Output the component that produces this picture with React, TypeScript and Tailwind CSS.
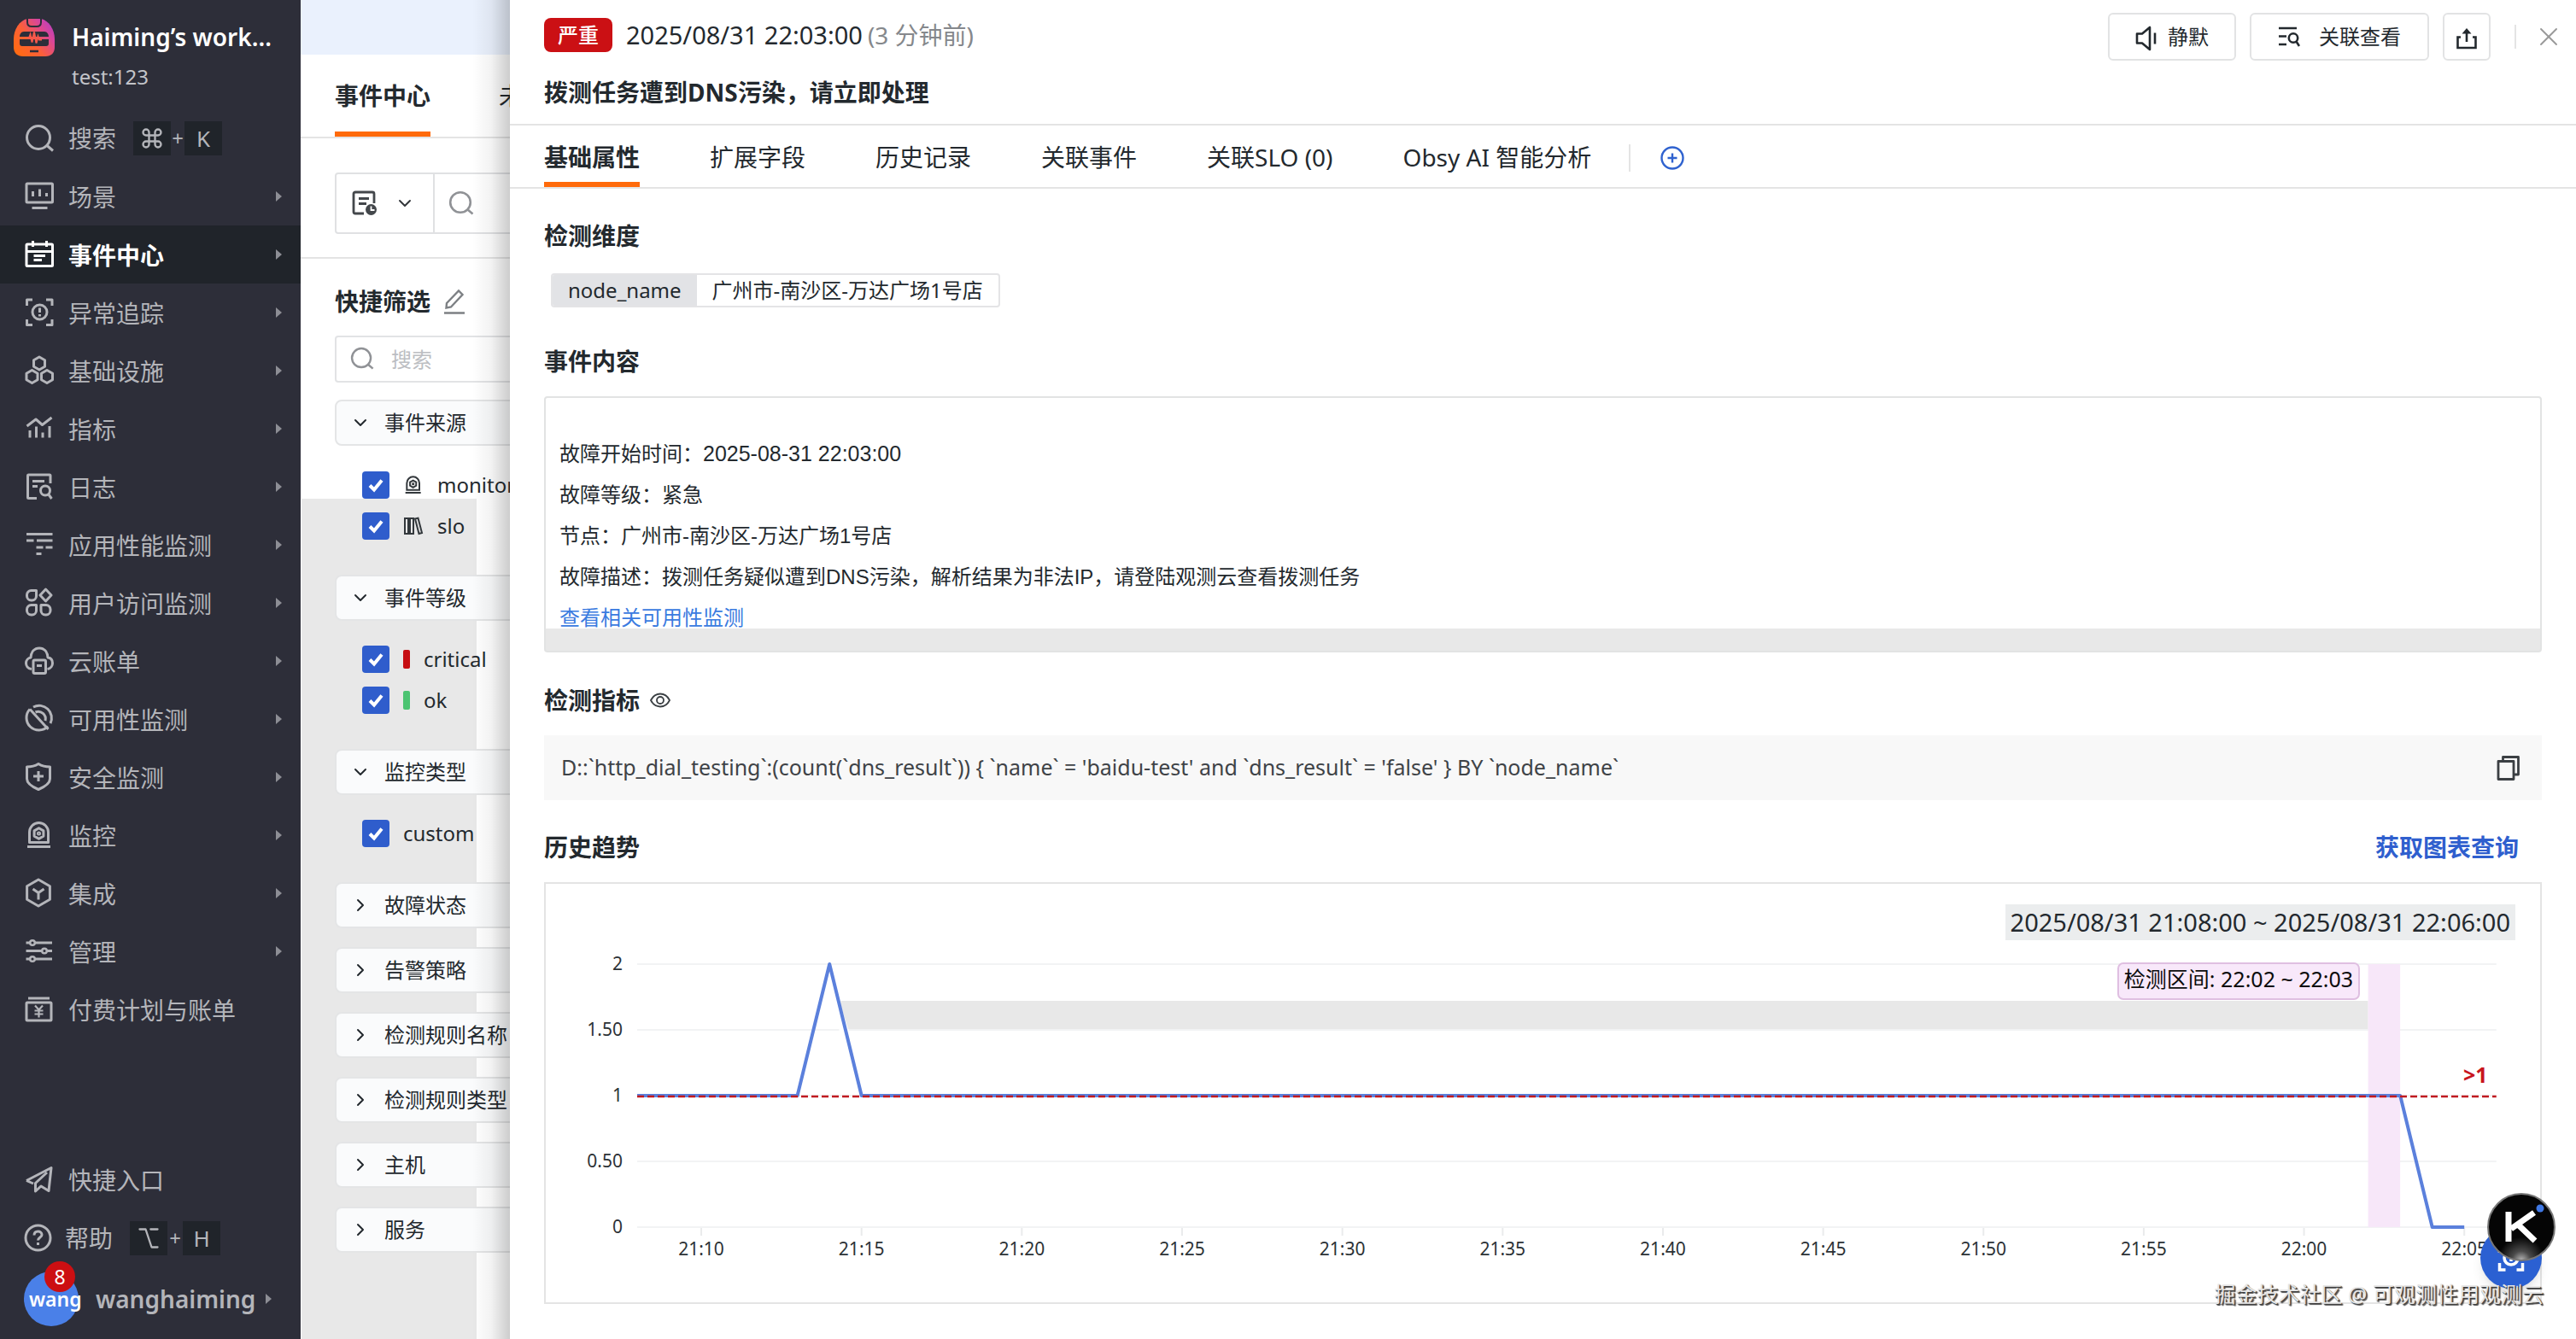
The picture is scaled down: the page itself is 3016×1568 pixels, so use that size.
import React from "react";
import { Command, Option, X, ChevronDown, ChevronRight } from "lucide-react";

const hexagon = (cx: number, cy: number, r: number) =>
  [0, 1, 2, 3, 4, 5]
    .map((i) => {
      const a = (Math.PI / 3) * i - Math.PI / 2;
      return `${(cx + r * Math.cos(a)).toFixed(1)},${(cy + r * Math.sin(a)).toFixed(1)}`;
    })
    .join(" ");

function NavSvg({ children }: { children: React.ReactNode }) {
  return (
    <svg viewBox="0 0 36 36" className="size-9 shrink-0" fill="none" stroke="currentColor" strokeWidth="3" strokeLinejoin="round" strokeLinecap="butt" aria-hidden="true">
      {children}
    </svg>
  );
}

const icons: Record<string, React.ReactNode> = {
  search: (
    <>
      <circle cx="17" cy="17" r="13.5" />
      <path d="M26.5 26 L34 32.5" />
    </>
  ),
  scene: (
    <>
      <rect x="3" y="3" width="30.5" height="22" rx="1" />
      <path d="M10.5 12v6M18.5 9.5v8.500M26.500 14v4M9.500 31.500h18" />
    </>
  ),
  event: (
    <>
      <rect x="3" y="6" width="30.500" height="25.500" rx="1" />
      <path d="M10.500 2v7M26.500 2v7M3 14.500h30.500M11.500 19.500h13.500M11.500 24.500h9.500" />
    </>
  ),
  trace: (
    <>
      <path d="M3.500 10V3H10M26 3h7v7M33 26v6.500h-7M10 32.500H3.500V26" />
      <circle cx="18.500" cy="17.500" r="8.500" />
      <path d="M18.500 12.500v5.500M18.500 20v2.500" />
    </>
  ),
  infra: (
    <>
      <polygon points={hexagon(18, 9.5, 7.5)} />
      <polygon points={hexagon(9.5, 25, 7.5)} />
      <polygon points={hexagon(27, 25, 7.5)} />
    </>
  ),
  metric: (
    <>
      <path d="M7 28.500V20M14.500 28.500V15.500M22 28.500V22.500M30 28.500V15" />
      <path d="M3.500 15L14 7l7.500 6.500L32.500 5" />
    </>
  ),
  log: (
    <>
      <path d="M15 31.500H5.500a1 1 0 0 1-1-1V5a1 1 0 0 1 1-1H30a1 1 0 0 1 1 1v9" />
      <path d="M10 11.500h14M10 17.500h6" />
      <circle cx="25" cy="22.500" r="5.500" />
      <path d="M28.500 26.500L32.500 32" />
    </>
  ),
  apm: <path d="M3 5.500h30.500M3 13h8.500M15 13h18.500M14.500 21h8M25.500 21h8M14.500 28.500h6" />,
  rum: (
    <>
      <path d="M8.500 3.500h6V10a5 5 0 0 1-5 5H8.500a5 5 0 0 1-5-5V8.500a5 5 0 0 1 5-5z" />
      <path d="M25.500 2l6.500 7-6.500 7-6.500-7z" />
      <path d="M8.500 20.500h6V27a5 5 0 0 1-5 5H8.500a5 5 0 0 1-5-5v-1.500a5 5 0 0 1 5-5z" />
      <path d="M20 20.500h6a5 5 0 0 1 5 5V27a5 5 0 0 1-5 5h-1a5 5 0 0 1-5-5z" />
    </>
  ),
  cloud: (
    <>
      <path d="M9 27.500C4.500 27 2.500 23.500 2.500 20.500c0-3.500 2.500-6 5.500-6.500C8.500 7 12.500 3 18 3s9.500 4 10 11c3.500.5 5.500 3 5.500 6.500 0 3-2 6.500-6 7" />
      <rect x="11" y="17" width="14.500" height="15.500" rx="1.500" />
      <path d="M15 23.500h6" />
    </>
  ),
  avail: (
    <>
      <path d="M7 6.500a14.500 14.500 0 1 0 21 20" />
      <path d="M11 4a14.500 14.500 0 0 1 20 19M13.500 10a8.500 8.500 0 0 1 11.500 10M7 6.500L28.500 30" />
    </>
  ),
  shield: (
    <>
      <path d="M17 2.500c4 2.500 8.500 3.500 13.500 3.500v14c0 6-6.500 9.500-13.500 12.500C10 29.500 3.500 26 3.500 20V6C8.500 6 13 5 17 2.500z" />
      <path d="M17 11v12M11 17h12" />
    </>
  ),
  monitor: (
    <>
      <path d="M6.500 26.500V14.500a11 11 0 0 1 22 0v12z" />
      <path d="M4 31.500h27" />
      <polygon points={hexagon(17.5, 16, 6.2)} />
      <circle cx="17.500" cy="16" r="1.500" strokeWidth="2" />
    </>
  ),
  integ: (
    <>
      <polygon points={hexagon(17, 17.5, 15.5)} />
      <path d="M10.500 13l6.500 4.500 6.500-4.500M17 17.500v8" />
    </>
  ),
  manage: (
    <>
      <path d="M2.500 8h5M13 8h20M2.500 17.500h19M27 17.500h6M2.500 27h5M13 27h20" />
      <circle cx="10" cy="8" r="2.800" strokeWidth="2.500" />
      <circle cx="24" cy="17.500" r="2.800" strokeWidth="2.500" />
      <circle cx="10" cy="27" r="2.800" strokeWidth="2.500" />
    </>
  ),
  billing: (
    <>
      <rect x="3" y="10" width="29" height="21" rx="1" />
      <path d="M5 5h25" />
      <path d="M13 13.500l4.500 5 4.500-5M17.500 18.500v9M12.500 19.500h10M12.500 23.500h10" strokeWidth="2.200" />
    </>
  ),
  plane: <path d="M3 18.500L32 3.500 29 30.500l-9-5.500-6.500 6V21.500L27 9M3 18.500l8 3.500" />,
  help: (
    <>
      <circle cx="16.500" cy="17.500" r="14.500" />
      <path d="M12 14.500c0-3 2-4.500 4.500-4.500s4.500 1.500 4.500 4c0 3-4.500 3-4.500 6.500M16.500 23v3" />
    </>
  ),
};

const nav = [
  ["scene", "场景"],
  ["event", "事件中心"],
  ["trace", "异常追踪"],
  ["infra", "基础设施"],
  ["metric", "指标"],
  ["log", "日志"],
  ["apm", "应用性能监测"],
  ["rum", "用户访问监测"],
  ["cloud", "云账单"],
  ["avail", "可用性监测"],
  ["shield", "安全监测"],
  ["monitor", "监控"],
  ["integ", "集成"],
  ["manage", "管理"],
  ["billing", "付费计划与账单"],
];

function Arrow() {
  return (
    <svg viewBox="0 0 7 12" className="h-3 w-[7px] shrink-0" fill="#8d8e95" aria-hidden="true">
      <path d="M0 0l7 6-7 6z" />
    </svg>
  );
}

function Key({ children }: { children: React.ReactNode }) {
  return <kbd className="flex h-10 w-11 items-center justify-center bg-[#20242a] font-sans text-[26px] leading-10">{children}</kbd>;
}

function Logo() {
  return (
    <svg viewBox="0 0 48 44" className="h-11 w-12 shrink-0" aria-hidden="true">
      <defs>
        <linearGradient id="logoFill" x1="0" y1="0.8" x2="1" y2="0.1">
          <stop offset="0" stopColor="#ff6a13" />
          <stop offset="0.4" stopColor="#fb5f3a" />
          <stop offset="0.75" stopColor="#d8459c" />
          <stop offset="1" stopColor="#b13fc4" />
        </linearGradient>
      </defs>
      <path d="M16 0h16c9 2 16 12 16 24v9c0 7-4 11-11 11H11C4 44 0 40 0 33v-9C0 12 7 2 16 0z" fill="url(#logoFill)" />
      <path d="M16 0v4c0 3 2 5 5 5h6c3 0 5-2 5-5V0" fill="none" stroke="#2d2e39" strokeWidth="2" />
      <path d="M12 15h24c3 0 5 3 5 6H7c0-3 2-6 5-6zM7 24h34v5c0 2-1 3-3 3H10c-2 0-3-1-3-3z" fill="#2d2e39" />
      <path d="M16 22.500h2l1.500-4 2 9 2.500-12 2.500 13 2-8 1.500 4h3" fill="none" stroke="#f7584a" strokeWidth="2" />
      <path d="M19 38h10" stroke="#2d2e39" strokeWidth="2.500" />
    </svg>
  );
}

function Sidebar() {
  return (
    <aside className="flex w-[352px] shrink-0 flex-col bg-[#2d2e39] text-[28px] text-[#b4b5ba]">
      <div className="flex h-32 gap-5 pl-4 pt-[22px]">
        <Logo />
        <div>
          <div className="text-[28px] font-semibold leading-[42px] text-white">Haiming’s work...</div>
          <div className="text-[24px] leading-[52px] text-[#c3c4c9]">test:123</div>
        </div>
      </div>
      <button className="flex h-[68px] items-center pl-7 text-left">
        <NavSvg>{icons.search}</NavSvg>
        <span className="ml-4 mr-5">搜索</span>
        <Key><Command className="size-7" strokeWidth={2} /></Key>
        <span className="w-4 text-center text-[24px]">+</span>
        <Key>K</Key>
      </button>
      <nav>
        {nav.map(([icon, label]) => (
          <a
            key={icon}
            href="#"
            className={
              icon === "event"
                ? "flex h-[68px] items-center gap-4 bg-[#20242a] pl-7 pr-[22px] font-semibold text-white"
                : "flex h-[68px] items-center gap-4 pl-7 pr-[22px]"
            }
          >
            <NavSvg>{icons[icon]}</NavSvg>
            <span className="flex-1 whitespace-nowrap pt-0.5">{label}</span>
            {icon !== "billing" && <Arrow />}
          </a>
        ))}
      </nav>
      <div className="mt-auto">
        <a href="#" className="flex h-[68px] items-center gap-4 pl-7">
          <NavSvg>{icons.plane}</NavSvg>
          <span>快捷入口</span>
        </a>
        <button className="flex h-[68px] items-center pl-7 text-left">
          <NavSvg>{icons.help}</NavSvg>
          <span className="ml-3 mr-5">帮助</span>
          <Key><Option className="size-7" strokeWidth={2} /></Key>
          <span className="w-[18px] text-center text-[24px]">+</span>
          <Key>H</Key>
        </button>
        <button className="flex h-[84px] items-center pb-2.5 pl-7">
          <span className="relative flex size-16 items-center whitespace-nowrap rounded-full bg-[#4a80e8] pl-1.5 text-[23px] font-semibold text-white">
            wang
            <span className="absolute -top-3 left-6 flex size-9 items-center justify-center rounded-full bg-[#cc0f12] text-[23px] font-normal leading-9">8</span>
          </span>
          <span className="ml-5 mr-3 font-semibold leading-10">wanghaiming</span>
          <Arrow />
        </button>
      </div>
    </aside>
  );
}

function CheckItem({ id, label, icon }: { id: string; label: string; icon?: React.ReactNode }) {
  return (
    <div className="flex h-8 items-center">
      <span className="relative mr-4 size-8 shrink-0">
        <input id={id} type="checkbox" defaultChecked className="peer size-8 appearance-none rounded-[4px] bg-white checked:bg-[#2f5dcc]" />
        <svg viewBox="0 0 32 32" className="pointer-events-none absolute inset-0 size-8" fill="none" stroke="white" strokeWidth="4" aria-hidden="true">
          <path d="M9 16.500l5 5 9-11" />
        </svg>
      </span>
      {icon}
      <label htmlFor={id} className="whitespace-nowrap leading-8">{label}</label>
    </div>
  );
}

function FilterHead({ label, open }: { label: string; open?: boolean }) {
  return (
    <button className="flex h-[54px] w-[360px] items-center rounded-lg border-2 border-[#e4e5e6] bg-[#fafbfc] pl-4 text-left">
      {open ? <ChevronDown className="size-6" strokeWidth={2} /> : <ChevronRight className="size-6" strokeWidth={2} />}
      <span className="ml-4 whitespace-nowrap leading-8">{label}</span>
    </button>
  );
}

function SearchIcon({ className }: { className: string }) {
  return (
    <svg viewBox="0 0 30 30" className={className} fill="none" stroke="#909296" strokeWidth="2.600" aria-hidden="true">
      <circle cx="14" cy="14" r="11.800" />
      <path d="M22 22l6.500 5.500" />
    </svg>
  );
}

function EventColumn() {
  return (
    <section className="relative w-[245px] shrink-0 overflow-hidden bg-white text-[24px] text-[#23292e]">
      <div className="h-16 bg-[#eaf1fd]" />
      <div className="flex h-[98px] gap-20 whitespace-nowrap border-b-2 border-[#e4e4e4] pl-10 text-[28px]">
        <button className="border-b-[6px] border-[#ff6a0a] pt-1.5 font-semibold">事件中心</button>
        <button className="pb-[6px] pt-1.5">未恢复事件</button>
      </div>
      <div className="h-[141px] border-b-2 border-[#e4e4e4] pl-10 pt-10">
        <div className="flex h-[72px] w-[400px] items-center rounded border-2 border-[#e0e1e3]">
          <button className="flex h-full w-[115px] items-center gap-5 border-r-2 border-[#e0e1e3] pl-[18px]" aria-label="视图">
            <svg viewBox="0 0 30 30" className="size-[30px]" fill="none" stroke="#43474b" strokeWidth="2.800">
              <path d="M14 27H4a2 2 0 0 1-2-2V4a2 2 0 0 1 2-2h20a2 2 0 0 1 2 2v11M8 9.500h12M8 15.500h9" />
              <circle cx="22.500" cy="22.500" r="6.500" fill="#43474b" stroke="none" />
              <path d="M22.500 18.500v4.500h4" stroke="white" strokeWidth="1.800" />
            </svg>
            <ChevronDown className="size-6 text-[#33373b]" />
          </button>
          <SearchIcon className="ml-4 size-[30px]" />
        </div>
      </div>
      <div className="h-[1265px] bg-[linear-gradient(#e8e8e8,#e8e8e8)] bg-[length:205px_100%] bg-[position:1px_281px] bg-no-repeat pl-10 pt-[30px]">
        <div className="flex h-10 items-center gap-3.5 whitespace-nowrap text-[28px] font-semibold">
          快捷筛选
          <svg viewBox="0 0 28 30" className="h-[30px] w-7" fill="none" stroke="#7d8084" strokeWidth="2.400" aria-hidden="true">
            <path d="M5 17L19 2.500l4.500 4.500L10 21.500l-5.500 1zM2 28.500h24" />
          </svg>
        </div>
        <div className="relative mt-[20px] h-[55px] w-[360px]">
          <SearchIcon className="absolute left-[18px] top-[13px] size-7" />
          <input aria-label="搜索" placeholder="搜索" className="h-full w-full rounded border-2 border-[#e2e3e5] pl-16 outline-none placeholder:text-[#bcbec2]" />
        </div>
        <div className="mt-[20px]">
          <FilterHead label="事件来源" open />
          <div className="flex flex-col gap-4 pb-[41px] pl-8 pt-[30px]">
            <CheckItem
              id="monitor"
              label="monitor"
              icon={
                <svg viewBox="0 0 36 36" className="mr-4 size-6 shrink-0" fill="none" stroke="#33383c" strokeWidth="3">
                  {icons.monitor}
                </svg>
              }
            />
            <CheckItem
              id="slo"
              label="slo"
              icon={
                <svg viewBox="0 0 24 24" className="mr-4 size-6 shrink-0" fill="none" stroke="#33383c" strokeWidth="2">
                  <path d="M2 3h4v18H2zM8 3h4v18H8zM14 3.500l3.500-.8L22 20l-3.500 1z" />
                </svg>
              }
            />
          </div>
          <FilterHead label="事件等级" open />
          <div className="flex flex-col gap-4 pb-[41px] pl-8 pt-[29px]">
            <CheckItem id="critical" label="critical" icon={<span className="mr-4 h-[22px] w-2 rounded-xs bg-[#c60d12]" />} />
            <CheckItem id="ok" label="ok" icon={<span className="mr-4 h-[22px] w-2 rounded-xs bg-[#4cc472]" />} />
          </div>
          <FilterHead label="监控类型" open />
          <div className="pb-[41px] pl-8 pt-[29px]">
            <CheckItem id="custom" label="custom" />
          </div>
          <div className="flex flex-col gap-[22px]">
            {["故障状态", "告警策略", "检测规则名称", "检测规则类型", "主机", "服务"].map((label) => (
              <FilterHead key={label} label={label} />
            ))}
          </div>
        </div>
      </div>
      <div className="pointer-events-none absolute inset-y-0 right-0 w-11 bg-linear-to-r from-transparent via-black/5 to-black/20" />
    </section>
  );
}

const tabs = ["基础属性", "扩展字段", "历史记录", "关联事件", "关联SLO (0)", "Obsy AI 智能分析"];

function DrawerHeader() {
  return (
    <header className="border-b-2 border-[#e4e4e4] pb-[17px] pl-10 pr-3.5 pt-[15px]">
      <div className="flex h-14 items-center">
        <div className="flex items-center pb-1 text-[29px] leading-10">
          <span className="flex h-10 items-center rounded-lg bg-[#cb1014] px-4 text-[24px] font-medium text-white">严重</span>
          <span className="ml-4">2025/08/31 22:03:00</span>
          <span className="ml-1.5 text-[28px] text-[#85888c]">(3 分钟前)</span>
        </div>
        <div className="ml-auto flex h-14 items-center gap-4 text-[24px]">
          <button className="flex h-14 items-center gap-3 rounded-md border-2 border-[#e2e3e4] px-[30px]">
            <svg viewBox="0 0 26 30" className="mt-1 h-[30px] w-[26px]" fill="none" stroke="currentColor" strokeWidth="2.600" strokeLinejoin="round">
              <path d="M2 9.500h6l9-7.500v26l-9-7.500H2zM23 8.500v13" />
            </svg>
            静默
          </button>
          <button className="flex h-14 items-center gap-[22px] rounded-md border-2 border-[#e2e3e4] px-[31px]">
            <svg viewBox="0 0 26 26" className="size-[26px]" fill="none" stroke="currentColor" strokeWidth="2.600">
              <path d="M1 3h21M1 12.500h9M1 22h9" />
              <circle cx="18" cy="14.500" r="5.200" />
              <path d="M21.500 18.500L25 24" />
            </svg>
            关联查看
          </button>
          <button className="flex size-14 items-center justify-center rounded-md border-2 border-[#e2e3e4]" aria-label="分享">
            <svg viewBox="0 0 26 26" className="mt-1 size-[26px]" fill="none" stroke="currentColor" strokeWidth="2.600">
              <path d="M6 11.500H2.500V24h21V11.500H20M13 17V5" />
              <path d="M7.500 7.500L13 1l5.500 6.500z" fill="currentColor" stroke="none" />
            </svg>
          </button>
          <span className="ml-3 h-7 w-0.5 bg-[#e4e4e4]" />
          <button aria-label="关闭" className="ml-1 text-[#999]">
            <X className="size-9" strokeWidth={1.25} />
          </button>
        </div>
      </div>
      <h1 className="mt-[17px] text-[28px] font-bold leading-10">拨测任务遭到DNS污染，请立即处理</h1>
    </header>
  );
}

function SectionTitle({ children }: { children: React.ReactNode }) {
  return <h2 className="text-[28px] font-semibold leading-10">{children}</h2>;
}

const plotLeft = 107;
const perMinute = 37.53;
const px = (minute: number) => plotLeft + minute * perMinute;
const py = (value: number) => 336 - value * 154;

const series: [number, number][] = [[0, 1], [5, 1], [6, 2], [7, 1], [55, 1], [56, 0], [57, 0]];
const ticks = ["21:10", "21:15", "21:20", "21:25", "21:30", "21:35", "21:40", "21:45", "21:50", "21:55", "22:00", "22:05"];

function TrendChart() {
  const right = px(58);
  return (
    <svg viewBox="0 0 2335 424" className="block w-full" role="img" aria-label="历史趋势">
      {[0, 0.5, 1, 1.5, 2].map((v) => (
        <g key={v}>
          <path d={`M${plotLeft} ${py(v)}H${right}`} stroke="#f2f3f4" strokeWidth="2" />
          <text x="90" y={py(v) + 7} textAnchor="end" fontSize="21" fill="#2c3236">
            {v % 1 ? v.toFixed(2) : v}
          </text>
        </g>
      ))}
      <rect x={px(6.35)} y="71" width={px(54) - px(6.35)} height="33" fill="#e8e8e8" />
      <path d={`M${px(6.3)} 70L${px(6.6)} 106H${px(6.3)}z`} fill="white" />
      <rect x={px(54)} y={py(2)} width={perMinute} height="308" fill="#f7e7f9" />
      {ticks.map((t, i) => (
        <g key={t}>
          <path d={`M${px(2 + i * 5)} 337v9`} stroke="#eaebec" strokeWidth="2" />
          <text x={px(2 + i * 5)} y="369" textAnchor="middle" fontSize="21" fill="#2c3236">{t}</text>
        </g>
      ))}
      <polyline points={series.map(([m, v]) => `${px(m).toFixed(1)},${py(v)}`).join(" ")} fill="none" stroke="#5b80dc" strokeWidth="4" strokeLinejoin="round" />
      <path d={`M${plotLeft} 183H${right}`} stroke="#c01a20" strokeWidth="2.500" strokeDasharray="8 4" />
      <text x="2245" y="167" fontSize="25" fontWeight="700" fill="#c8161d">&gt;1</text>
      <rect x="1841" y="27" width="282" height="42" rx="6" fill="#f8e8fa" stroke="#dfbfe1" strokeWidth="2" />
      <text x="1982" y="55" textAnchor="middle" fontSize="25" fill="#0c0c0c">检测区间: 22:02 ~ 22:03</text>
    </svg>
  );
}

function FloatingButtons() {
  return (
    <div className="absolute bottom-[91px] right-6">
      <button aria-label="扫描" className="absolute -bottom-8 right-4 size-[72px] rounded-full bg-[#2b60d2] shadow-lg">
        <svg viewBox="0 0 72 72" className="size-[72px]" fill="none" stroke="white" strokeWidth="3.500">
          <path d="M22.500 42v8h7M42.500 50h7v-8M22.500 30v-7h7M42.500 23h7v7" />
          <circle cx="36" cy="36" r="8" />
          <path d="M36 32v8" />
        </svg>
      </button>
      <button aria-label="助手" className="relative block size-20 rounded-full">
        <svg viewBox="0 0 80 80" className="size-20">
          <defs>
            <radialGradient id="kGlow" cx="0.5" cy="1" r="0.35">
              <stop offset="0" stopColor="#b8b8b8" />
              <stop offset="0.4" stopColor="#4a4a4a" />
              <stop offset="1" stopColor="#050505" />
            </radialGradient>
          </defs>
          <circle cx="40" cy="40" r="39" fill="url(#kGlow)" stroke="#777" strokeWidth="2" />
          <path d="M25 22v35M55 23L28 42M35 36L56 56" fill="none" stroke="white" strokeWidth="7" />
          <circle cx="62" cy="18" r="4.500" fill="#3f78e4" />
        </svg>
      </button>
    </div>
  );
}

function Drawer() {
  return (
    <main className="relative min-w-0 flex-1 bg-white text-[#23292e]">
      <DrawerHeader />
      <div className="flex h-[74px] items-stretch gap-[82px] border-b-2 border-[#e4e4e4] pl-10 text-[28px]">
        {tabs.map((t, i) => (
          <button
            key={t}
            className={i === 0 ? "border-b-[6px] border-[#ff6a0a] pt-2 font-bold" : "border-b-[6px] border-transparent pt-2"}
          >
            {t}
          </button>
        ))}
        <div className="-ml-[38px] flex items-center gap-[34px] pt-1">
          <span className="h-8 w-0.5 bg-[#e4e4e4]" />
          <button aria-label="添加">
            <svg viewBox="0 0 30 30" className="size-[30px]" fill="none" stroke="#2f62cf" strokeWidth="2.400">
              <circle cx="15" cy="15" r="12.500" />
              <path d="M15 9.500v11M9.500 15h11" />
            </svg>
          </button>
        </div>
      </div>

      <div className="px-10 pt-[35px]">
        <SectionTitle>检测维度</SectionTitle>
        <div className="ml-2 mt-6 flex h-10 w-fit items-stretch overflow-hidden rounded border-2 border-[#e4e4e6] text-[24px] leading-9">
          <span className="bg-[#e2e3e6] px-[18px]">node_name</span>
          <span className="px-[18px]">广州市-南沙区-万达广场1号店</span>
        </div>

        <div className="mt-[43px]"><SectionTitle>事件内容</SectionTitle></div>
        <div className="mt-[21px] rounded border-2 border-[#e2e3e3] bg-[linear-gradient(#e8e8e8,#e8e8e8)] bg-[length:100%_26px] bg-bottom bg-no-repeat px-4 pb-[14px] pt-[41px] font-['Liberation_Sans','Noto_Sans_CJK_SC',sans-serif] text-[24px] leading-[48px]">
          <p>故障开始时间：<time className="text-[25px]">2025-08-31 22:03:00</time></p>
          <p>故障等级：紧急</p>
          <p>节点：广州市-南沙区-万达广场1号店</p>
          <p>故障描述：拨测任务疑似遭到DNS污染，解析结果为非法IP，请登陆观测云查看拨测任务</p>
          <a href="#" className="block w-fit text-[#3a7be0]">查看相关可用性监测</a>
        </div>

        <div className="mt-9 flex items-center gap-3">
          <SectionTitle>检测指标</SectionTitle>
          <svg viewBox="0 0 24 20" className="h-5 w-6" fill="none" stroke="#3b4044" strokeWidth="1.800" aria-hidden="true">
            <path d="M1 10C3.500 5 7.500 2.500 12 2.500S20.500 5 23 10c-2.500 5-6.500 7.500-11 7.500S3.500 15 1 10z" />
            <circle cx="12" cy="10" r="4" />
          </svg>
        </div>
        <div className="mt-[21px] flex h-[76px] items-center justify-between bg-[#f8f8f8] pl-5 pr-6 text-[25px] text-[#3f4347]">
          <code className="font-['Noto_Sans',sans-serif]">
            {"D::`http_dial_testing`:(count(`dns_result`)) { `name` = 'baidu-test' and `dns_result` = 'false' } BY `node_name`"}
          </code>
          <button aria-label="复制">
            <svg viewBox="0 0 30 30" className="size-[30px]" fill="none" stroke="#3b3f43" strokeWidth="2.800" strokeLinejoin="round">
              <rect x="3" y="7.500" width="18" height="21" />
              <path d="M8.500 7.500V2.500h18V23H21" />
            </svg>
          </button>
        </div>

        <div className="mt-[35px] flex items-center justify-between pr-[27px]">
          <SectionTitle>历史趋势</SectionTitle>
          <a href="#" className="text-[28px] font-semibold leading-10 text-[#2f5fce]">获取图表查询</a>
        </div>
        <div className="mt-[21px] border-2 border-[#e4e4e4] pt-6">
          <div className="mr-[29px] flex justify-end">
            <span className="bg-[#ebedee] px-1.5 text-[29px] leading-[42px]">2025/08/31 21:08:00 ~ 2025/08/31 22:06:00</span>
          </div>
          <TrendChart />
        </div>
      </div>

      <FloatingButtons />
      <div className="absolute bottom-8 right-[38px] text-[25px] leading-[42px] text-[#e6e6e6] [text-shadow:1px_1px_1px_#333,2px_2px_1px_#555]">
        掘金技术社区 @ 可观测性用观测云
      </div>
    </main>
  );
}

export default function App() {
  return (
    <div className="flex min-h-screen bg-white font-['Noto_Sans','Noto_Sans_CJK_SC',sans-serif]">
      <Sidebar />
      <EventColumn />
      <Drawer />
    </div>
  );
}
